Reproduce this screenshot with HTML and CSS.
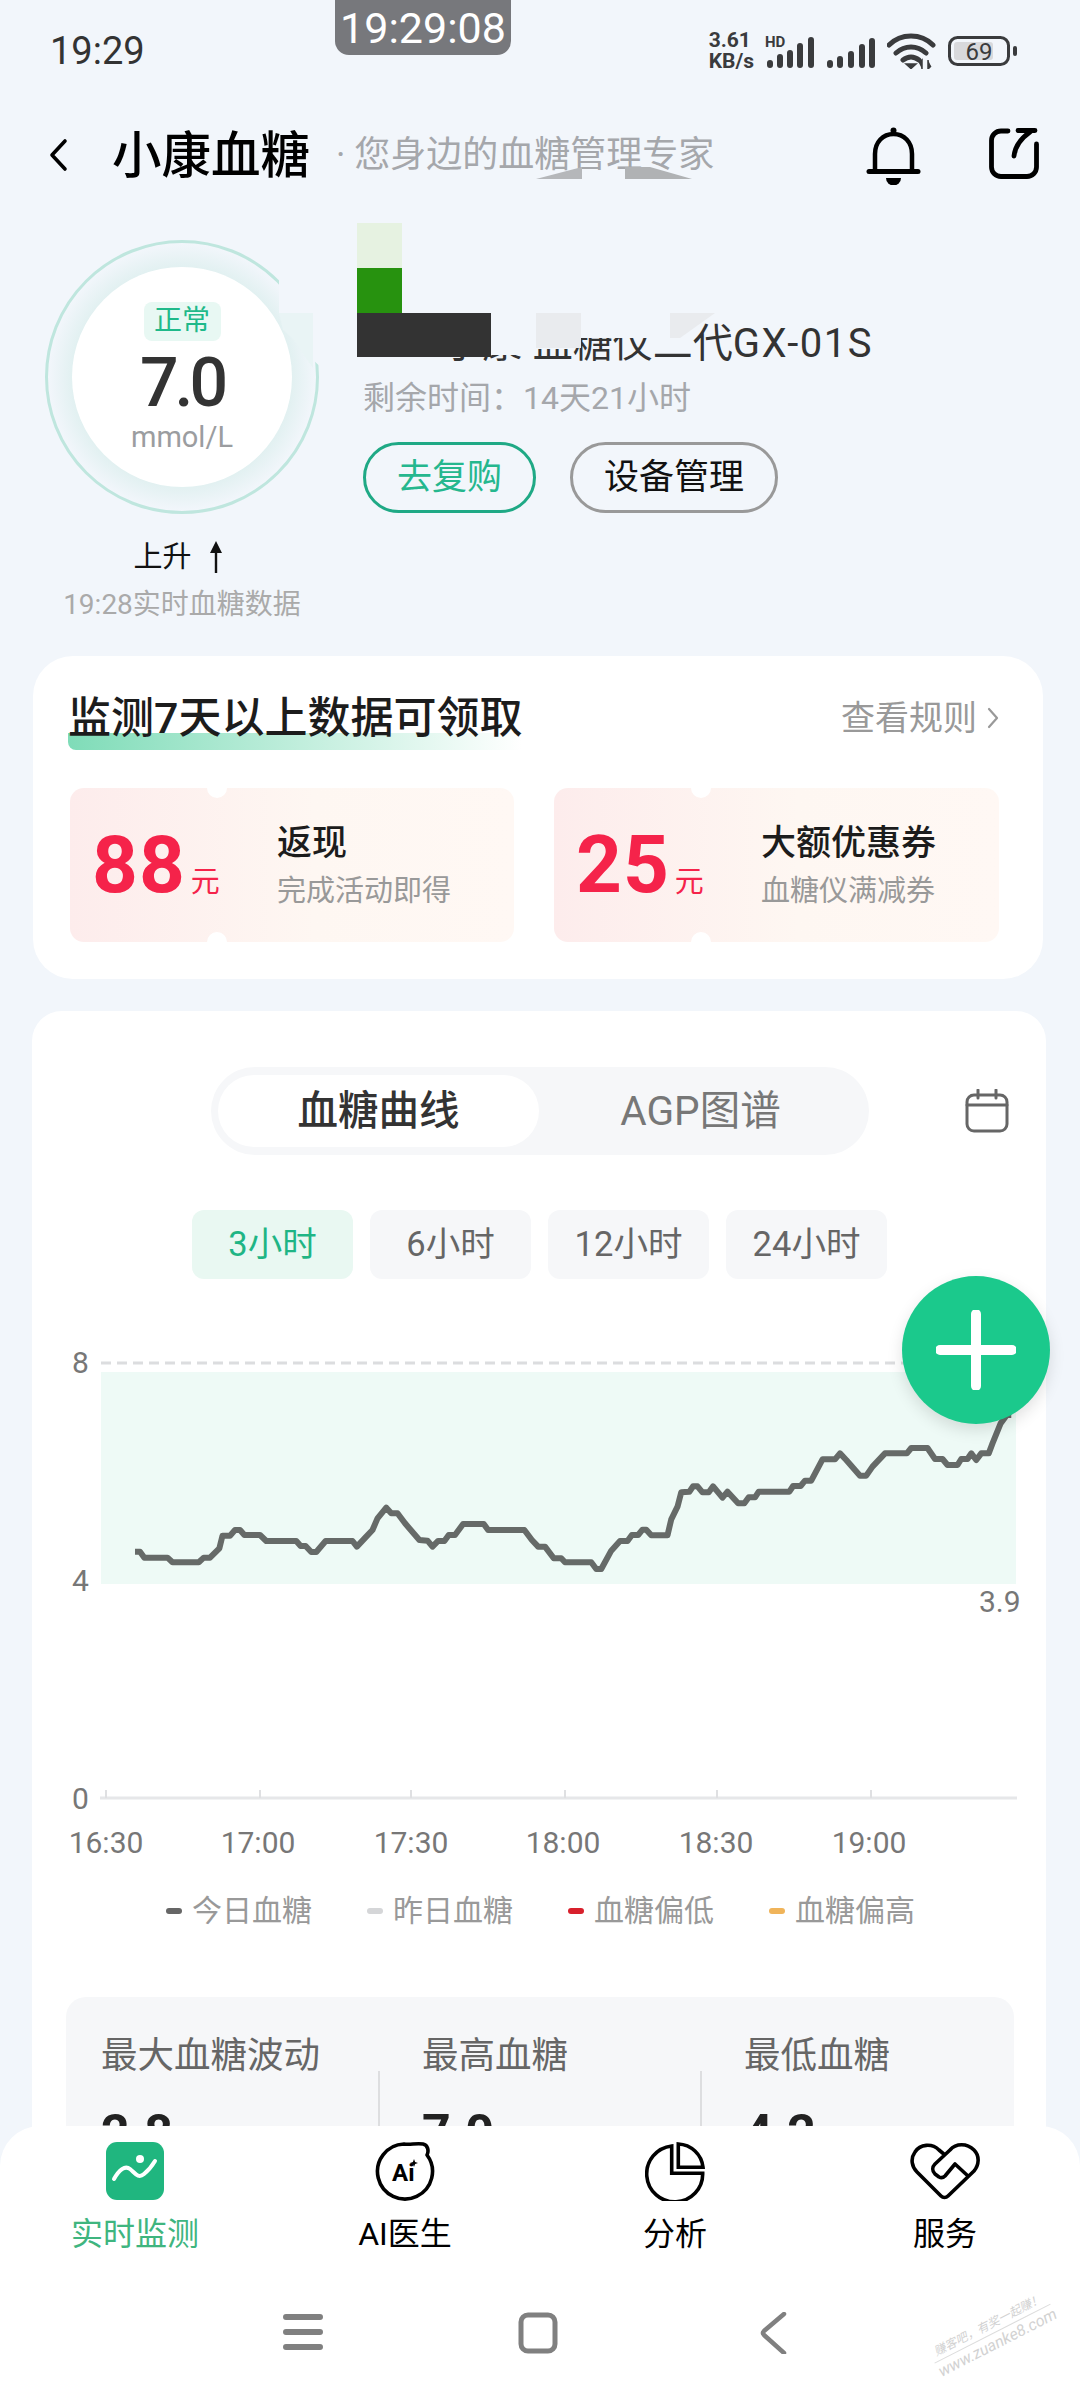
FILE: index.html
```html
<!DOCTYPE html>
<html lang="zh-CN">
<head>
    <meta charset="UTF-8">
    <meta name="viewport" content="width=device-width, initial-scale=1.0">
    <title>小康血糖</title>
    <link rel="stylesheet" href="styles.css">
</head>
<body>

<!-- Barra de status -->
<div class="status">
    <span class="status-time">19:29</span>
    <div class="status-icons">
        <div class="net-speed">3.61<br>KB/s</div>
        <svg class="ic-signal ic-signal-a" width="50" height="34" viewBox="0 0 50 34">
            <text x="1" y="13" class="hd-text">HD</text>
            <path d="M6 31v-2M16 31v-8M26 31v-12M36 31v-19M47 31V6" fill="none" stroke="#3a3b3d" stroke-width="6" stroke-linecap="round"/>
        </svg>
        <svg class="ic-signal ic-signal-b" width="50" height="34" viewBox="0 0 50 34">
            <path d="M4 31v-2M14 31v-6M25 31v-11M36 31v-18M46 31V7" fill="none" stroke="#3a3b3d" stroke-width="6" stroke-linecap="round"/>
        </svg>
        <svg class="ic-wifi" width="50" height="36" viewBox="0 0 50 36">
            <path d="M2 12C14 0 34 0 46 12M9 20c9-8 21-8 30 0M16 27c5-4 11-4 16 0" fill="none" stroke="#3a3b3d" stroke-width="5" stroke-linecap="round"/>
            <path d="M19 31h10l-5 4.5zM35 36v-9l-3 3M41 27v9l3-3" fill="#3a3b3d" stroke="#3a3b3d" stroke-width="1.5"/>
        </svg>
        <svg class="ic-battery" width="70" height="30" viewBox="0 0 70 30">
            <rect x="1.5" y="1.5" width="59" height="27" rx="8" fill="none" stroke="#3a3b3d" stroke-width="3"/>
            <rect x="6" y="6" width="39" height="18" rx="3" fill="#d8d9dc"/>
            <text x="31" y="24" class="battery-text">69</text>
            <rect x="65" y="10" width="4" height="10" rx="2" fill="#3a3b3d"/>
        </svg>
    </div>
</div>
<div class="clock-pill">19:29:08</div>

<!-- Cabeçalho -->
<div class="header">
    <svg class="ic-back" width="22" height="34" viewBox="0 0 22 34">
        <path d="M17 3L4 17l13 14" fill="none" stroke="#000" stroke-width="3.6" stroke-linecap="round" stroke-linejoin="round"/>
    </svg>
    <span class="header-title">小康血糖</span>
    <span class="header-sub">· 您身边的血糖管理专家</span>
    <div class="header-actions">
        <svg width="60" height="60" viewBox="0 0 60 60">
            <path d="M10 46V29C10 17 18 9 28.5 9S47 17 47 29V46" fill="none" stroke="#000" stroke-width="4.5"/>
            <path d="M4 46.5h49" fill="none" stroke="#000" stroke-width="5" stroke-linecap="round"/>
            <circle cx="28.5" cy="5.5" r="3" fill="#000"/>
            <path d="M21 53h15a7.500 7.500 0 0 1-15 0z" fill="#000"/>
        </svg>
        <svg width="60" height="60" viewBox="0 0 60 60">
            <path d="M23 6H16a9.500 9.500 0 0 0-9.500 9.500V42A9.500 9.500 0 0 0 16 51.500H42A9.500 9.500 0 0 0 51.500 42V19" fill="none" stroke="#000" stroke-width="4.8" stroke-linecap="round"/>
            <path d="M29 31C30 22 35 14 45 7M33 5.500H50" fill="none" stroke="#000" stroke-width="4.8" stroke-linecap="round"/>
        </svg>
    </div>
</div>

<!-- Sensor e valor atual -->
<div class="hero">
    <div class="hero-left">
        <div class="ring">
            <div class="ring-inner">
                <span class="ring-tag">正常</span>
                <span class="ring-value">7.0</span>
                <span class="ring-unit">mmol/L</span>
            </div>
        </div>
        <div class="trend">上升
            <svg width="14" height="32" viewBox="0 0 14 32">
                <path d="M7 0l6 12H8.200V32H5.800V12H1z" fill="#111"/>
            </svg>
        </div>
        <div class="updated">19:28实时血糖数据</div>
    </div>
    <div class="hero-right">
        <div class="product">小康·血糖仪二代<span class="product-code">GX-01S</span></div>
        <div class="remain">剩余时间：14天21小时</div>
        <div class="hero-btns">
            <span class="btn-pill btn-green">去复购</span>
            <span class="btn-pill btn-gray">设备管理</span>
        </div>
    </div>
</div>

<!-- Cartão de recompensa -->
<div class="card reward">
    <div class="reward-head">
        <span class="reward-title">监测7天以上数据可领取</span>
        <span class="reward-rule">查看规则
            <svg width="12" height="22" viewBox="0 0 12 22">
                <path d="M2 2l8 9-8 9" fill="none" stroke="#999" stroke-width="2.200" stroke-linecap="round" stroke-linejoin="round"/>
            </svg>
        </span>
    </div>
    <div class="coupons">
        <div class="coupon">
            <div class="coupon-amount"><b>88</b><i>元</i></div>
            <div class="coupon-info">
                <span class="coupon-name">返现</span>
                <span class="coupon-desc">完成活动即得</span>
            </div>
        </div>
        <div class="coupon">
            <div class="coupon-amount"><b>25</b><i>元</i></div>
            <div class="coupon-info">
                <span class="coupon-name">大额优惠券</span>
                <span class="coupon-desc">血糖仪满减券</span>
            </div>
        </div>
    </div>
</div>

<!-- Cartão do gráfico -->
<div class="card graph">
    <div class="seg-row">
        <div class="seg">
            <span class="seg-item seg-active">血糖曲线</span>
            <span class="seg-item">AGP图谱</span>
        </div>
        <svg class="ic-cal" width="44" height="44" viewBox="0 0 44 44">
            <rect x="2" y="6" width="40" height="36" rx="7" fill="none" stroke="#666" stroke-width="3"/>
            <path d="M2 16h40M13 1v8M31 1v8" fill="none" stroke="#666" stroke-width="3" stroke-linecap="round"/>
        </svg>
    </div>

    <div class="ranges">
        <span class="range range-active">3小时</span>
        <span class="range">6小时</span>
        <span class="range">12小时</span>
        <span class="range">24小时</span>
    </div>

    <svg class="chart" width="1014" height="530" viewBox="32 1340 1014 530">
        <line x1="101" y1="1363" x2="1016" y2="1363" stroke="#dcdddf" stroke-width="3" stroke-dasharray="10 6"/>
        <rect x="101" y="1372" width="915" height="212" fill="#eefaf6"/>
        <g transform="translate(60 1380) scale(.625 .3333)">
            <polyline fill="none" stroke="#666a68" stroke-width="6" stroke-linejoin="round" vector-effect="non-scaling-stroke" points="120,515 128,515 135,533 172,533 180,547 222,547 230,533 240,533 255,505 260,467 272,467 280,450 288,450 295,465 320,465 330,483 378,483 385,498 393,498 402,516 410,516 425,483 468,483 475,500 490,470 500,450 508,415 522,383 530,400 540,400 552,430 575,480 588,482 596,500 605,483 615,483 622,465 632,465 645,432 678,432 685,450 743,450 755,480 765,500 776,500 790,535 802,535 808,547 850,547 858,567 866,567 882,512 896,483 908,483 915,465 925,465 932,449 938,449 946,466 972,466 978,418 988,380 994,337 1007,335 1013,319 1020,319 1028,337 1038,337 1045,319 1060,353 1068,335 1085,370 1095,370 1102,352 1112,352 1118,335 1167,335 1173,318 1185,318 1192,302 1202,302 1220,238 1240,238 1248,220 1258,240 1280,287 1290,287 1300,260 1320,220 1355,220 1362,204 1388,204 1400,237 1412,237 1420,255 1436,255 1442,237 1452,237 1458,220 1466,240 1474,220 1486,220 1492,190 1505,130 1515,105 1522,105"/>
        </g>
        <text class="chart-text" x="72" y="1373">8</text>
        <text class="chart-text" x="72" y="1591">4</text>
        <text class="chart-text" x="72" y="1809">0</text>
        <text class="chart-text" x="979" y="1612">3.9</text>
        <path d="M100 1798H1017" stroke="#e6e7e9" stroke-width="3"/>
        <path d="M106 1790v8M260 1790v8M411 1790v8M565 1790v8M717 1790v8M871 1790v8" stroke="#dfe0e2" stroke-width="2"/>
        <g class="chart-time">
            <text x="106" y="1853">16:30</text>
            <text x="258" y="1853">17:00</text>
            <text x="411" y="1853">17:30</text>
            <text x="563" y="1853">18:00</text>
            <text x="716" y="1853">18:30</text>
            <text x="869" y="1853">19:00</text>
        </g>
    </svg>

    <div class="legend">
        <span class="legend-item"><i class="dash dash-today"></i>今日血糖</span>
        <span class="legend-item"><i class="dash dash-yest"></i>昨日血糖</span>
        <span class="legend-item"><i class="dash dash-low"></i>血糖偏低</span>
        <span class="legend-item"><i class="dash dash-high"></i>血糖偏高</span>
    </div>

    <div class="stats">
        <div class="stat stat-first">
            <span class="stat-label">最大血糖波动</span>
            <span class="stat-value">2.8</span>
        </div>
        <div class="stat">
            <span class="stat-label">最高血糖</span>
            <span class="stat-value">7.0</span>
        </div>
        <div class="stat stat-last">
            <span class="stat-label">最低血糖</span>
            <span class="stat-value">4.2</span>
        </div>
    </div>
</div>

<!-- Botão flutuante -->
<div class="fab">
    <svg width="80" height="80" viewBox="0 0 80 80">
        <path d="M40 4v72M4 40h72" stroke="#fff" stroke-width="10" stroke-linecap="round"/>
    </svg>
</div>

<!-- Tarjas da captura original -->
<svg class="mosaic" width="1080" height="400" viewBox="0 0 1080 400">
    <path d="M536 179l46-12v12z" fill="#b5b7ba"/>
    <path d="M625 167h25l42 12h-67z" fill="#b0b2b4"/>
    <path d="M279 270h46v101l-12-11v-47h-34z" fill="#f2f6fb"/>
    <path d="M279 313h34v55l-21-30-9-8z" fill="#e9f4f5"/>
    <rect x="357" y="223" width="45" height="45" fill="#e6f2e1"/>
    <rect x="357" y="268" width="45" height="45" fill="#27920f"/>
    <rect x="357" y="313" width="134" height="44" fill="#333"/>
    <path d="M491 313h199v31h-40v-6h-80v11h-44v6h-35z" fill="#f2f6fb"/>
    <path d="M536 313h45v35h-45z" fill="#e9ebee"/>
    <path d="M670 313h45l-35 25h-10z" fill="#e9ebee"/>
</svg>

<!-- Barra inferior -->
<div class="tabbar">
    <div class="tabs">
        <div class="tab tab-active">
            <svg width="60" height="60" viewBox="0 0 60 60">
                <rect x="1" y="1" width="58" height="58" rx="11" fill="#20b67f"/>
                <path d="M9 38C14 29 20 24 25 28S33 38 39 33C44 29 47 25 50 20" fill="none" stroke="#fff" stroke-width="4" stroke-linecap="round"/>
                <circle cx="35" cy="18" r="4" fill="#fff"/>
            </svg>
            <span>实时监测</span>
        </div>
        <div class="tab">
            <svg width="62" height="60" viewBox="0 0 62 60">
                <path d="M53 14A27.500 27.500 0 1 1 30 3C36 4 42 2 49 3C54 4 55 10 53 14Z" fill="none" stroke="#000" stroke-width="3.600" stroke-linejoin="round"/>
                <text x="18" y="40" class="ai-text">Ai</text>
                <path d="M40 18l1.100 2.900 2.900 1.100-2.900 1.100-1.100 2.900-1.100-2.900-2.900-1.100 2.900-1.100z" fill="#000"/>
            </svg>
            <span>AI医生</span>
        </div>
        <div class="tab">
            <svg width="60" height="60" viewBox="0 0 60 60">
                <path d="M26.700 5A28 28 0 1 0 57.700 32.300H26.700Z" fill="none" stroke="#000" stroke-width="3.600"/>
                <path d="M33.300 3V26.300H58A26 26 0 0 0 33.300 3Z" fill="none" stroke="#000" stroke-width="3.600"/>
            </svg>
            <span>分析</span>
        </div>
        <div class="tab">
            <svg width="70" height="60" viewBox="0 0 70 60">
                <path d="M35 14L29 9C22 2 10 3 5 11C0 18 2 26 7 31L31 55C33 57 36 57 38 55L64 30C69 24 70 15 64 9C57 2 46 2 40 9L25 23C22 26 22 30 25 33L29 36C31 37 33 37 35 35L45 23L58 35" fill="none" stroke="#000" stroke-width="3.600" stroke-linejoin="round"/>
            </svg>
            <span>服务</span>
        </div>
    </div>
    <div class="navbar">
        <div class="nav-item">
            <svg width="40" height="40" viewBox="0 0 40 40">
                <path d="M3 5h34M3 20h34M3 35h34" stroke="#808080" stroke-width="6" stroke-linecap="round"/>
            </svg>
        </div>
        <div class="nav-item">
            <svg width="40" height="42" viewBox="0 0 40 42">
                <rect x="3" y="3" width="34" height="36" rx="7" fill="none" stroke="#808080" stroke-width="5"/>
            </svg>
        </div>
        <div class="nav-item">
            <svg width="28" height="42" viewBox="0 0 28 42">
                <path d="M25 2L5 19c-1.500 1.500-1.500 2.500 0 4l20 18" fill="none" stroke="#808080" stroke-width="4.500" stroke-linecap="round"/>
            </svg>
        </div>
    </div>
    <div class="watermark">
        <div class="wm-top">赚客吧，有奖一起赚！</div>
        <div class="wm-bottom">www.zuanke8.com</div>
    </div>
</div>

</body>
</html>
```

FILE: styles.css
```css
body {
    font-family: Roboto, 'Noto Sans CJK SC', sans-serif;
    background-color: #f2f6fb;
    margin: 0;
    padding: 0;
    width: 1080px;
    height: 2400px;
    overflow: hidden;
    position: relative;
    color: #111;
}

/* Status */
.status {
    height: 100px;
    display: flex;
    justify-content: space-between;
    align-items: center;
    padding: 2px 62px 0 50px;
    box-sizing: border-box;
}

.status-time {
    font-size: 38px;
    color: #333;
}

.status-icons {
    display: flex;
    align-items: center;
    gap: 8px;
}

.net-speed {
    font-size: 21px;
    line-height: 21px;
    font-weight: 700;
    color: #3a3b3d;
    margin-right: 2px;
}

.hd-text {
    font-family: Roboto, sans-serif;
    font-size: 15px;
    font-weight: 700;
    fill: #3a3b3d;
}

.ic-signal-a {
    margin-right: 4px;
}

.ic-signal-b {
    margin-right: 3px;
}

.ic-wifi {
    margin-right: 3px;
}

.battery-text {
    font-family: Roboto, sans-serif;
    font-size: 24px;
    fill: #3a3b3d;
    text-anchor: middle;
}

.clock-pill {
    position: absolute;
    left: 335px;
    top: 0;
    width: 176px;
    height: 55px;
    background-color: #77787c;
    border-radius: 0 0 14px 14px;
    color: #fff;
    font-size: 43px;
    line-height: 56px;
    text-align: center;
}

/* Header */
.header {
    height: 110px;
    display: flex;
    align-items: center;
    padding: 0 35px 0 48px;
}

.header-title {
    font-size: 49.500px;
    font-weight: 500;
    color: #000;
    margin-left: 42px;
    padding-bottom: 8px;
}

.header-sub {
    font-size: 36px;
    color: #a5a7ab;
    margin-left: 26px;
    padding-bottom: 8px;
}

.header-actions {
    margin-left: auto;
    display: flex;
    gap: 60px;
}

/* Hero */
.hero {
    height: 446px;
    display: flex;
    padding-left: 45px;
    box-sizing: border-box;
}

.hero-left {
    width: 274px;
    padding-top: 30px;
    text-align: center;
}

.ring {
    width: 274px;
    height: 274px;
    box-sizing: border-box;
    border: 3px solid #bfe6de;
    border-radius: 50%;
    display: flex;
    align-items: center;
    justify-content: center;
    background: radial-gradient(circle closest-side, #e0f0f0 80%, #f2f6fb 100%);
}

.ring-inner {
    width: 220px;
    height: 220px;
    border-radius: 50%;
    background-color: white;
    display: flex;
    flex-direction: column;
    align-items: center;
}

.ring-tag {
    margin-top: 35px;
    width: 77px;
    height: 39px;
    border-radius: 8px;
    background-color: #e8f8f3;
    color: #1fb98a;
    font-size: 28px;
    line-height: 38px;
    text-align: center;
}

.ring-value {
    font-size: 68px;
    font-weight: 500;
    line-height: 70px;
    letter-spacing: -4px;
    color: #333;
    margin-top: 7px;
}

.ring-unit {
    font-size: 29px;
    line-height: 36px;
    color: #9b9da0;
    margin-top: 1px;
}

.trend {
    display: flex;
    align-items: center;
    justify-content: center;
    gap: 17px;
    font-size: 29px;
    line-height: 40px;
    margin-top: 23px;
    padding-right: 8px;
    color: #111;
}

.updated {
    font-size: 28px;
    line-height: 36px;
    color: #aaa;
    margin-top: 10px;
    white-space: nowrap;
    margin-left: -20px;
    margin-right: -20px;
}

.hero-right {
    margin-left: 44px;
    padding-top: 106px;
}

.product {
    width: 510px;
    display: flex;
    justify-content: flex-end;
    white-space: nowrap;
    font-size: 40px;
    line-height: 56px;
    color: #333;
}

.product-code {
    letter-spacing: 1.500px;
}

.remain {
    font-size: 32px;
    line-height: 44px;
    color: #a5a7ab;
    margin-top: 4px;
}

.hero-btns {
    display: flex;
    gap: 34px;
    margin-top: 22px;
}

.btn-pill {
    height: 71px;
    box-sizing: border-box;
    border-radius: 36px;
    font-size: 35px;
    line-height: 65px;
    padding: 0 31px;
    border: 3px solid #999;
    color: #111;
}

.btn-green {
    border-color: #1fa985;
    color: #25b78e;
}

/* Cards */
.card {
    background-color: white;
    box-sizing: border-box;
}

.reward {
    margin-left: 33px;
    width: 1010px;
    border-radius: 40px;
    padding: 35px 44px 37px 37px;
}

.reward-head {
    display: flex;
    justify-content: space-between;
    align-items: flex-start;
}

.reward-title {
    font-size: 43px;
    font-weight: 500;
    line-height: 48px;
    padding-top: 3px;
    padding-bottom: 8px;
    margin-left: -2px;
    color: #1c1c1c;
    background: linear-gradient(90deg, #7fdcb8, #ffffff) left bottom / 100% 17px no-repeat;
    border-radius: 8px 0 0 8px;
}

.reward-rule {
    font-size: 34px;
    line-height: 48px;
    padding-top: 3px;
    color: #999;
    display: flex;
    align-items: center;
    gap: 10px;
}

.coupons {
    display: grid;
    grid-template-columns: 444px 445px;
    gap: 40px;
    margin-top: 38px;
}

.coupon {
    height: 154px;
    display: flex;
    align-items: center;
    position: relative;
    overflow: hidden;
    border-radius: 14px;
    background: linear-gradient(90deg, #fdecec, #fef7f2 55%, #fff8f4);
}

.coupon::before,
.coupon::after {
    content: "";
    position: absolute;
    left: 137px;
    width: 20px;
    height: 20px;
    border-radius: 50%;
    background-color: white;
}

.coupon::before {
    top: -10px;
}

.coupon::after {
    bottom: -10px;
}

.coupon-amount {
    width: 207px;
    box-sizing: border-box;
    padding-left: 22px;
    display: flex;
    align-items: baseline;
    gap: 5px;
    color: #f5234a;
}

.coupon-amount b {
    font-size: 80px;
    line-height: 90px;
    font-weight: 700;
    letter-spacing: 1px;
}

.coupon-amount i {
    font-size: 29px;
    font-style: normal;
}

.coupon-info {
    display: flex;
    flex-direction: column;
    gap: 3px;
    padding-top: 5px;
}

.coupon-name {
    font-size: 35px;
    line-height: 44px;
    font-weight: 500;
    color: #1c1c1c;
}

.coupon-desc {
    font-size: 29px;
    line-height: 44px;
    color: #999;
}

.graph {
    margin-left: 32px;
    margin-top: 32px;
    width: 1014px;
    height: 1500px;
    border-radius: 30px;
    padding-top: 56px;
}

.seg-row {
    display: flex;
    align-items: center;
    padding-left: 179px;
}

.seg {
    width: 658px;
    height: 88px;
    box-sizing: border-box;
    padding: 8px 7px;
    border-radius: 44px;
    background-color: #f6f7f9;
    display: flex;
}

.seg-item {
    flex: 1;
    text-align: center;
    font-size: 40.500px;
    line-height: 72px;
    color: #777;
}

.seg-active {
    flex: none;
    width: 321px;
    background-color: white;
    border-radius: 36px;
    color: #333;
    font-weight: 500;
}

.ic-cal {
    margin-left: 96px;
}

.ranges {
    display: flex;
    gap: 17px;
    margin-top: 55px;
    padding-left: 160px;
}

.range {
    width: 161px;
    height: 69px;
    border-radius: 12px;
    background-color: #f6f7f9;
    color: #666;
    font-size: 34.500px;
    line-height: 68px;
    text-align: center;
}

.range-active {
    background-color: #e9f8f2;
    color: #1fb585;
}

.chart {
    display: block;
    margin-top: 61px;
}

.chart-text {
    font-size: 30px;
    fill: #777;
}

.chart-time text {
    font-size: 30px;
    fill: #777;
    text-anchor: middle;
}

.legend {
    display: flex;
    gap: 55px;
    margin-top: 21px;
    padding-left: 134px;
    height: 39px;
}

.legend-item {
    display: flex;
    align-items: center;
    gap: 10px;
    font-size: 30px;
    line-height: 40px;
    color: #999;
}

.dash {
    width: 16px;
    height: 6px;
    border-radius: 3px;
}

.dash-today { background-color: #666; }
.dash-yest { background-color: #d5d6d8; }
.dash-low { background-color: #d8202c; }
.dash-high { background-color: #f0b45a; }

.stats {
    margin-left: 34px;
    margin-top: 67px;
    width: 948px;
    height: 300px;
    border-radius: 20px;
    background-color: #f6f7f9;
    display: flex;
    padding-top: 34px;
    box-sizing: border-box;
}

.stat {
    flex: none;
    width: 322px;
    box-sizing: border-box;
    padding-left: 44px;
    display: flex;
    flex-direction: column;
    position: relative;
}

.stat-first {
    width: 312px;
    padding-left: 35px;
}

.stat-last {
    width: 314px;
}

.stat:not(.stat-first)::before {
    content: "";
    position: absolute;
    left: 0;
    top: 40px;
    width: 2px;
    height: 100px;
    background-color: #dddee0;
}

.stat-label {
    font-size: 36.500px;
    line-height: 50px;
    color: #666;
}

.stat-value {
    font-size: 50px;
    line-height: 66px;
    font-weight: 700;
    color: #222;
    margin-top: 19px;
}

/* Floating */
.fab {
    position: absolute;
    left: 902px;
    top: 1276px;
    width: 148px;
    height: 148px;
    border-radius: 50%;
    background-color: #1bc98c;
    box-shadow: 0 6px 16px rgba(0, 0, 0, 0.12);
    display: flex;
    align-items: center;
    justify-content: center;
}

.mosaic {
    position: absolute;
    left: 0;
    top: 0;
}

/* Tabs */
.tabbar {
    position: absolute;
    left: 0;
    right: 0;
    bottom: 0;
    height: 274px;
    background-color: white;
    border-radius: 40px 40px 0 0;
}

.tabs {
    display: grid;
    grid-template-columns: repeat(4, 270px);
    padding-top: 15px;
}

.tab {
    display: flex;
    flex-direction: column;
    align-items: center;
    font-size: 32px;
    line-height: 44px;
    color: #000;
}

.tab svg {
    height: 60px;
    margin-bottom: 11px;
}

.tab-active {
    color: #3fb57f;
}

.ai-text {
    font-family: Roboto, sans-serif;
    font-size: 24px;
    font-weight: 700;
    fill: #000;
}

.navbar {
    display: flex;
    justify-content: center;
    margin-top: 56px;
    padding-right: 4px;
}

.nav-item {
    width: 235px;
    height: 42px;
    display: flex;
    justify-content: center;
}

.watermark {
    position: absolute;
    left: 928px;
    top: 190px;
    width: 130px;
    transform: rotate(-27deg);
    color: #d2d2d2;
    font-style: italic;
    text-align: center;
}

.wm-top {
    font-size: 12px;
    line-height: 17px;
    border-bottom: 1px solid #dcdcdc;
    white-space: nowrap;
}

.wm-bottom {
    font-size: 16px;
    line-height: 19px;
}
```
